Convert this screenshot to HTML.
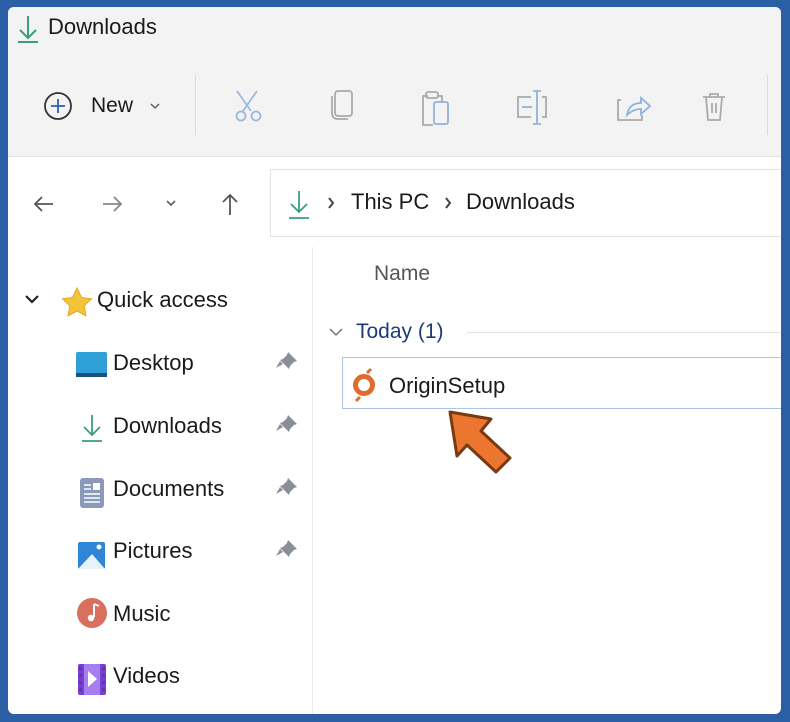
<!DOCTYPE html>
<html><head><style>
*{margin:0;padding:0;box-sizing:border-box}
body{width:790px;height:722px;background:#2a5fa6;font-family:"Liberation Sans","DejaVu Sans",sans-serif;position:relative;overflow:hidden;color:#1a1a1a}
.win{position:absolute;left:8px;top:7px;width:773px;height:707px;background:#fff;border-radius:6px;overflow:hidden}
.tb{position:absolute;left:0;top:0;width:100%;height:150px;background:#f3f3f3;border-bottom:1px solid #e0e0e0}
.t{position:absolute;white-space:nowrap}
.sep{position:absolute;width:1px;background:#dcdcdc}
</style></head><body>
<div class="win">
<div class="tb"></div>
<svg style="position:absolute;left:0;top:0" width="773" height="707">
<g stroke="#3a9e7e" stroke-width="2" fill="none"><path d="M20 9v22M12 23l8 8 8-8M10 35h20"/></g>
<circle cx="50" cy="99" r="13" fill="none" stroke="#333" stroke-width="1.8"/>
<path d="M50 92v14M43 99h14" stroke="#2a5fb0" stroke-width="1.8"/>
<path d="M143 97l4 4 4-4" stroke="#555" stroke-width="1.3" fill="none"/>
<g fill="none" stroke="#9bb9dc" stroke-width="1.8"><path d="M229 84l14 20M249 84l-14 20"/><circle cx="233" cy="109" r="4.5"/><circle cx="248" cy="109" r="4.5"/></g>
<g fill="none" stroke="#aaa" stroke-width="1.8"><rect x="327" y="84" width="17" height="25" rx="3"/><path d="M324 89v17q0 6 6 6h10"/></g>
<g fill="none" stroke="#aaa" stroke-width="1.8"><path d="M420 89h-5v29h10"/><rect x="418" y="85" width="12" height="6" rx="2"/><path d="M430 89h4v6"/></g>
<rect x="426" y="95" width="14" height="22" rx="2" fill="none" stroke="#8fb3dc" stroke-width="1.8"/>
<g fill="none" stroke="#aaa" stroke-width="1.8"><path d="M523 90h-13v20h13M534 90h4v20h-4"/></g>
<g stroke="#8fb3dc" stroke-width="1.8" fill="none"><path d="M529 84v33M525 84h8M525 117h8M514 100h10"/></g>
<g fill="none" stroke="#aaa" stroke-width="1.8"><path d="M613 93h-3v20h24v-5"/></g>
<path d="M619 108q2-12 14-12v-5l9 8-9 8v-5q-8 0-14 6z" fill="none" stroke="#8fb3dc" stroke-width="1.8"/>
<g fill="none" stroke="#aaa" stroke-width="1.8"><path d="M695 90h22M702 90v-3h8v3M698 90l2 23h12l2-23M704 96v10M708 96v10"/></g>
<g fill="none" stroke-width="1.8"><path d="M27 197h18M34 190l-7 7 7 7" stroke="#555"/><path d="M95 197h18M106 190l7 7-7 7" stroke="#888"/><path d="M159 194l4 4 4-4" stroke="#666"/><path d="M222 208v-20M215 195l7-7 7 7" stroke="#555"/></g>
<rect x="262.5" y="162.5" width="530" height="67" fill="#fff" stroke="#e3e3e3"/>
<g stroke="#3a9e7e" stroke-width="1.8" fill="none"><path d="M291 184v20M283 197l8 8 8-8M281 211h20"/></g>
<path d="M321 191l4 5-4 5M438 191l4 5-4 5" stroke="#444" stroke-width="2" fill="none"/>
<line x1="304.5" y1="240" x2="304.5" y2="707" stroke="#ececec"/>
<path d="M18 289l6 6 6-6" stroke="#222" stroke-width="2.2" fill="none"/>
<path d="M69 281l4.5 9.5 10 1.3-7.3 7 1.8 10-9-4.8-9 4.8 1.8-10-7.3-7 10-1.3z" fill="#f2c43a" stroke="#e3a91f" stroke-width="1"/>
<rect x="68" y="345" width="31" height="24" rx="2" fill="#2f9fd8"/><rect x="68" y="366" width="31" height="4" fill="#1b4f7c"/>
<g stroke="#3a9e7e" stroke-width="1.8" fill="none"><path d="M84 408v20M76 420l8 8 8-8M74 434h20"/></g>
<rect x="72" y="471" width="24" height="30" rx="3" fill="#8a9ab8"/><g stroke="#fff" stroke-width="1.5"><path d="M76 478h7M76 482h7M76 487h16M76 491h16M76 495h16"/></g><rect x="85" y="476" width="7" height="7" fill="#fff"/>
<rect x="70" y="535" width="27" height="27" rx="2" fill="#2f86d6"/><path d="M70 562l14-15 13 15z" fill="#e8f2fb"/><circle cx="91" cy="540" r="2.5" fill="#fff"/>
<circle cx="84" cy="606" r="15" fill="#d96f5e"/><path d="M86 597v13" stroke="#fff" stroke-width="2"/><circle cx="83" cy="611" r="3.2" fill="#fff"/><path d="M86 597l5 2" stroke="#fff" stroke-width="2"/>
<rect x="70" y="657" width="28" height="31" rx="2" fill="#7a3ed6"/><rect x="76" y="657" width="16" height="31" fill="#a77ef0"/><path d="M80 664l9 8-9 8z" fill="#fff"/>
<g fill="#5a3aa0"><rect x="71" y="660" width="3" height="3"/><rect x="71" y="667" width="3" height="3"/><rect x="71" y="674" width="3" height="3"/><rect x="71" y="681" width="3" height="3"/><rect x="94" y="660" width="3" height="3"/><rect x="94" y="667" width="3" height="3"/><rect x="94" y="674" width="3" height="3"/><rect x="94" y="681" width="3" height="3"/></g>
<g fill="#8a8f96"><path d="M280 345l9 9-3 1-4 4-1 3-9-9 3-1 4-4zM272 354l-4 7 7-4z"/><path d="M280 408l9 9-3 1-4 4-1 3-9-9 3-1 4-4zM272 417l-4 7 7-4z"/><path d="M280 471l9 9-3 1-4 4-1 3-9-9 3-1 4-4zM272 480l-4 7 7-4z"/><path d="M280 533l9 9-3 1-4 4-1 3-9-9 3-1 4-4zM272 542l-4 7 7-4z"/></g>
<path d="M322 322l6 6 6-6" stroke="#666" stroke-width="1.3" fill="none"/>
<line x1="459" y1="325.5" x2="773" y2="325.5" stroke="#e3e3e3"/>
<rect x="334.5" y="350.5" width="450" height="51" fill="#fff" stroke="#a9c6ea"/>
<circle cx="356" cy="378" r="8.5" fill="none" stroke="#e06a30" stroke-width="5"/><path d="M359 366l4-4M352 390l-4 4" stroke="#e06a30" stroke-width="3"/>
<path d="M442 405l41 7-10 12 29 27-14 14-29-27-10 11z" fill="#ec7630" stroke="#7a3a10" stroke-width="3" stroke-linejoin="round"/>
</svg>
<div class="sep" style="left:187px;top:68px;height:60px"></div>
<div class="sep" style="left:759px;top:68px;height:60px"></div>
<div class="t" style="left:40px;top:7px;font-size:22px">Downloads</div>
<div class="t" style="left:83px;top:87px;font-size:21px">New</div>
<div class="t" style="left:343px;top:182px;font-size:22px">This PC</div>
<div class="t" style="left:458px;top:182px;font-size:22px">Downloads</div>
<div class="t" style="left:366px;top:255px;font-size:21px;color:#555">Name</div>
<div class="t" style="left:348px;top:313px;font-size:21px;color:#1f3a7a">Today (1)</div>
<div class="t" style="left:381px;top:366px;font-size:22px">OriginSetup</div>
<div class="t" style="left:89px;top:280px;font-size:22px">Quick access</div>
<div class="t" style="left:105px;top:343px;font-size:22px">Desktop</div>
<div class="t" style="left:105px;top:406px;font-size:22px">Downloads</div>
<div class="t" style="left:105px;top:469px;font-size:22px">Documents</div>
<div class="t" style="left:105px;top:531px;font-size:22px">Pictures</div>
<div class="t" style="left:105px;top:594px;font-size:22px">Music</div>
<div class="t" style="left:105px;top:656px;font-size:22px">Videos</div>
</div>
</body></html>
